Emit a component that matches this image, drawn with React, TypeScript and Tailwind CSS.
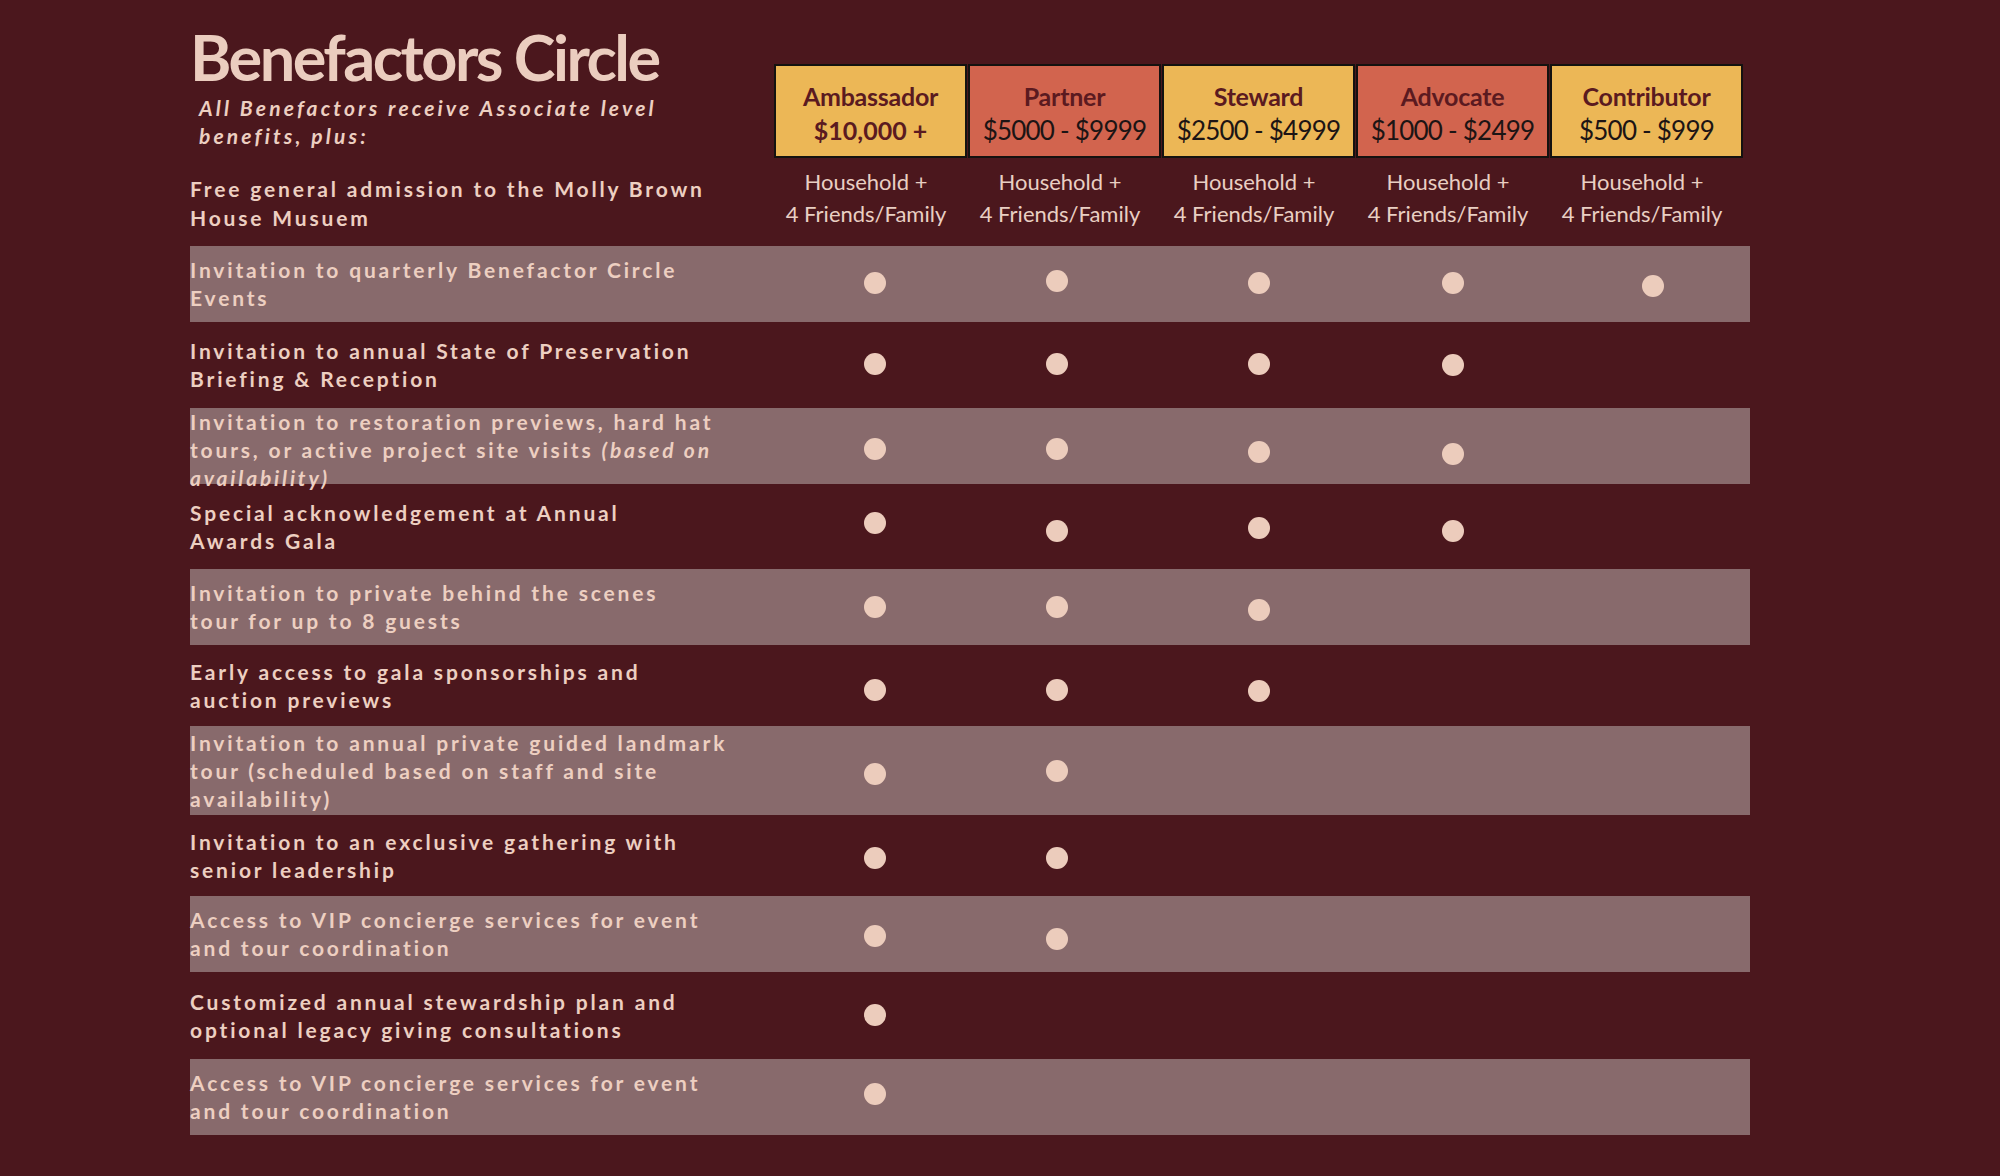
const tiers = [
  { name: "Ambassador", price: "$10,000 +", bg: "bg-[#ecb756]", priceBold: true },
  { name: "Partner", price: "$5000 - $9999", bg: "bg-[#d2644e]", priceBold: false },
  { name: "Steward", price: "$2500 - $4999", bg: "bg-[#ecb756]", priceBold: false },
  { name: "Advocate", price: "$1000 - $2499", bg: "bg-[#d2644e]", priceBold: false },
  { name: "Contributor", price: "$500 - $999", bg: "bg-[#ecb756]", priceBold: false },
];

// horizontal nudge of each column's dots
const dotShift = ["translate-x-[4px]", "-translate-x-[8px]", "", "", "translate-x-[6px]"];

type Benefit = {
  lines: React.ReactNode[];
  height: string;
  // vertical offset (px) of each dot from the row's middle
  dots: number[];
};

const benefits: Benefit[] = [
  {
    lines: ["Invitation to quarterly Benefactor Circle", "Events"],
    height: "h-[76px]",
    dots: [-1, -3, -1, -1, 2],
  },
  {
    lines: ["Invitation to annual State of Preservation", "Briefing & Reception"],
    height: "h-[86px]",
    dots: [-1, -1, -1, 0],
  },
  {
    lines: [
      "Invitation to restoration previews, hard hat",
      <>
        tours, or active project site visits <em>(based on</em>
      </>,
      <em>availability)</em>,
    ],
    height: "h-[76px]",
    dots: [-1, -1, 2, 4],
  },
  {
    lines: ["Special acknowledgement at Annual", "Awards Gala"],
    height: "h-[85px]",
    dots: [-4, 4, 1, 4],
  },
  {
    lines: ["Invitation to private behind the scenes", "tour for up to 8 guests"],
    height: "h-[76px]",
    dots: [0, 0, 3],
  },
  {
    lines: ["Early access to gala sponsorships and", "auction previews"],
    height: "h-[81px]",
    dots: [4, 4, 5],
  },
  {
    lines: [
      "Invitation to annual private guided landmark",
      "tour (scheduled based on staff and site",
      "availability)",
    ],
    height: "h-[89px]",
    dots: [3, 0],
  },
  {
    lines: ["Invitation to an exclusive gathering with", "senior leadership"],
    height: "h-[81px]",
    dots: [2, 2],
  },
  {
    lines: ["Access to VIP concierge services for event", "and tour coordination"],
    height: "h-[76px]",
    dots: [2, 5],
  },
  {
    lines: ["Customized annual stewardship plan and", "optional legacy giving consultations"],
    height: "h-[87px]",
    dots: [-1],
  },
  {
    lines: ["Access to VIP concierge services for event", "and tour coordination"],
    height: "h-[76px]",
    dots: [-3],
  },
];

const font = "font-['Lato','Liberation_Sans',sans-serif]";

export default function App() {
  return (
    <div className={`min-h-screen w-full bg-[#4b171d] pl-[190px] text-[#edcfc1] ${font}`}>
      <div className="w-[1560px]">
        {/* heading + tier boxes */}
        <div className="grid h-[158px] grid-cols-[584px_repeat(5,194px)]">
          <div className="pt-[22px]">
            <h1 className="whitespace-nowrap text-[63px] font-bold leading-[70px] tracking-[-0.04em] text-[#ebcdbf]">
              Benefactors Circle
            </h1>
            <p className="ml-[9px] mt-[2px] whitespace-nowrap text-[21px] font-bold italic leading-[28px] tracking-[0.15em]">
              All Benefactors receive Associate level
              <br />
              benefits, plus:
            </p>
          </div>
          {tiers.map((t) => (
            <div
              key={t.name}
              className={`mt-[64px] flex h-[94px] w-[193px] flex-col items-center justify-center border-2 border-[#141210] pt-[3px] ${t.bg}`}
            >
              <div className="text-[25px] font-bold leading-[34px] tracking-[-0.01em] text-[#5b1a20]">
                {t.name}
              </div>
              <div
                className={
                  t.priceBold
                    ? "text-[25px] font-bold leading-[34px] text-[#5b1a20]"
                    : "whitespace-nowrap text-[26px] leading-[34px] tracking-[-0.03em] text-[#1c1414]"
                }
              >
                {t.price}
              </div>
            </div>
          ))}
        </div>

        {/* household row */}
        <div className="grid h-[88px] grid-cols-[584px_repeat(5,194px)] items-center">
          <div className="whitespace-nowrap pt-[2px] text-[21px] font-bold leading-[29px] tracking-[0.135em]">
            Free general admission to the Molly Brown
            <br />
            House Musuem
          </div>
          {tiers.map((t) => (
            <div
              key={t.name}
              className="-mt-[8px] -translate-x-[5px] text-center text-[22px] leading-[32px] text-[#e9cfc3]"
            >
              Household +
              <br />
              4 Friends/Family
            </div>
          ))}
        </div>

        {/* benefit rows */}
        {benefits.map((b, i) => (
          <div
            key={i}
            className={`grid grid-cols-[584px_repeat(5,194px)] items-center ${b.height} ${
              i % 2 === 0 ? "bg-[#886a6c]" : ""
            }`}
          >
            <div className="whitespace-nowrap text-[21px] font-bold leading-[28px] tracking-[0.135em]">
              {b.lines.map((line, j) => (
                <div key={j}>{line}</div>
              ))}
            </div>
            {b.dots.map((dy, c) => (
              <div key={c} className="flex justify-center">
                <span
                  className={`block h-[22px] w-[22px] rounded-full bg-[#ecccbc] ${dotShift[c]}`}
                  style={{ marginTop: dy * 2 }}
                />
              </div>
            ))}
          </div>
        ))}
      </div>
    </div>
  );
}
